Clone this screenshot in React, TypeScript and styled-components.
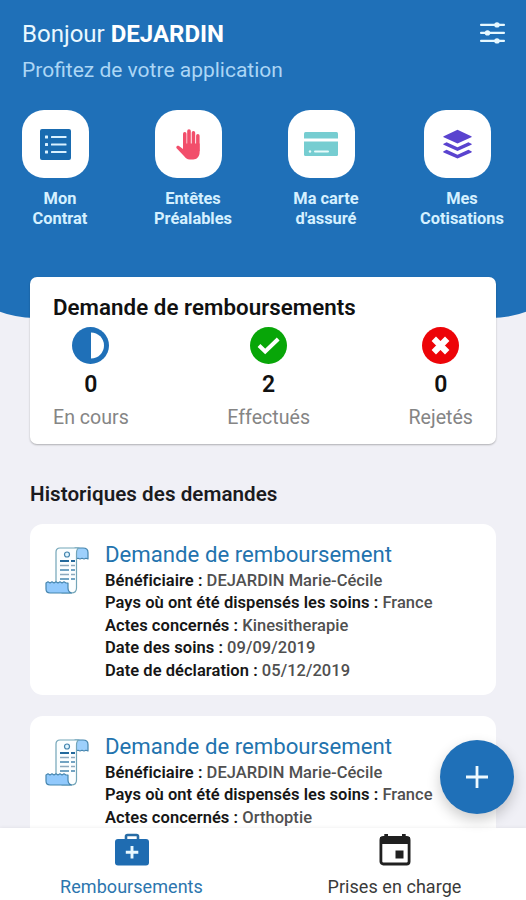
import React from "react";
import styled, { createGlobalStyle } from "styled-components";

const BLUE = "#1f70b8";

const GlobalStyle = createGlobalStyle`
  *, *::before, *::after { box-sizing: border-box; }
  body { margin: 0; background: #f0f0f6; font-family: Roboto, "Liberation Sans", sans-serif; }
  h1, h2, h3, p { margin: 0; }
  svg { display: block; }
`;

const Screen = styled.div`
  position: relative;
  display: flex;
  flex-direction: column;
  width: 526px;
  height: 900px;
  overflow: hidden;
  background: #f0f0f6;
`;

const Content = styled.main`
  flex: 1;
  min-height: 0;
  overflow: hidden;
`;

const Header = styled.header`
  height: 318px;
  margin: 0 -65px;
  padding: 20px 86px 0 87px;
  border-radius: 0 0 100px 100px;
  background: ${BLUE};
  color: #fff;
`;

const TopBar = styled.div`
  display: flex;
  justify-content: space-between;
  align-items: flex-start;
`;

const Greeting = styled.h1`
  font-size: 24px;
  line-height: 28px;
  font-weight: 400;
  color: #e9f8ff;
  white-space: nowrap;
`;

const UserName = styled.b`
  font-weight: 700;
  color: #fff;
`;

const Tagline = styled.p`
  margin-top: 9px;
  font-size: 21px;
  line-height: 26px;
  color: #acd6f5;
  white-space: nowrap;
`;

const MenuButton = styled.div`
  padding-top: 1px;
`;

const Shortcuts = styled.nav`
  display: grid;
  grid-template-columns: 133px 133px 133px 139px;
  margin: 27px 0 0 -28.5px;
`;

const Shortcut = styled.div`
  display: flex;
  flex-direction: column;
  align-items: center;
`;

const Tile = styled.div`
  display: grid;
  place-items: center;
  width: 67px;
  height: 68px;
  margin-right: 10px;
  border-radius: 22px;
  background: #fff;
`;

const ShortcutLabel = styled.span`
  margin-top: 11px;
  font-size: 16.4px;
  line-height: 19.5px;
  font-weight: 700;
  text-align: center;
  white-space: pre-line;
  color: #d5f0ff;
`;

const Summary = styled.section`
  height: 167px;
  margin: -41px 30px 0;
  padding: 16px 23px 0;
  border-radius: 7px;
  background: #fff;
  box-shadow: 0 1px 2px rgba(0, 0, 0, 0.28);
`;

const SummaryTitle = styled.h2`
  font-size: 22.3px;
  line-height: 28px;
  font-weight: 600;
  letter-spacing: 0.05px;
  color: #111;
  white-space: nowrap;
`;

const Stats = styled.div`
  display: flex;
  justify-content: space-between;
  margin-top: 6px;
`;

const Stat = styled.div`
  display: flex;
  flex-direction: column;
  align-items: center;
`;

const StatValue = styled.strong`
  margin-top: 7px;
  font-size: 23px;
  line-height: 28px;
  font-weight: 600;
  color: #111;
`;

const StatLabel = styled.span`
  margin-top: 7px;
  font-size: 19.6px;
  line-height: 24px;
  color: #858585;
`;

const SectionTitle = styled.h2`
  margin: 38px 30px 0;
  font-size: 20.6px;
  line-height: 24px;
  font-weight: 600;
  letter-spacing: 0.05px;
  color: #1b1b1e;
`;

const RequestList = styled.div`
  display: grid;
  gap: 21px;
  padding: 18px 30px 0;
`;

const RequestCard = styled.article`
  display: flex;
  align-items: flex-start;
  gap: 15px;
  height: 171px;
  padding: 16px 16px 0 15px;
  border-radius: 13px;
  background: #fff;
`;

const ReceiptSlot = styled.div`
  flex: none;
  padding-top: 7px;
`;

const RequestTitle = styled.h3`
  margin-bottom: 2px;
  font-size: 22.2px;
  line-height: 28px;
  font-weight: 400;
  color: #2273ae;
  white-space: nowrap;
`;

const Field = styled.p`
  font-size: 16.5px;
  line-height: 22.4px;
  font-weight: 500;
  letter-spacing: 0.04px;
  color: #505050;
  white-space: nowrap;
`;

const FieldName = styled.span`
  font-weight: 600;
  color: #161616;
`;

const TabBar = styled.nav`
  display: grid;
  grid-template-columns: 263px 263px;
  flex: none;
  height: 72px;
  background: #fff;
  box-shadow: 0 -1px 3px rgba(0, 0, 0, 0.05);
`;

const Tab = styled.div<{ $active?: boolean }>`
  display: flex;
  flex-direction: column;
  align-items: center;
  padding-top: 5px;
  font-size: 18px;
  line-height: 22px;
  letter-spacing: 0.05px;
  color: ${(p) => (p.$active ? "#2c76ae" : "#3a3a3a")};
`;

const TabLabel = styled.span`
  margin-top: 10px;
`;

const AddButton = styled.div`
  position: absolute;
  right: 12px;
  bottom: 86px;
  display: grid;
  place-items: center;
  width: 74px;
  height: 74px;
  border-radius: 50%;
  background: ${BLUE};
  box-shadow: 0 6px 14px rgba(0, 0, 0, 0.2);
`;

const SlidersIcon = () => (
  <svg width="25" height="24" viewBox="0 0 25 24" fill="#e6f8ff">
    <rect y="2.8" width="25" height="2.2" rx="1" />
    <rect y="10.8" width="25" height="2.2" rx="1" />
    <rect y="18.8" width="25" height="2.2" rx="1" />
    <circle cx="17" cy="3.9" r="2.7" />
    <circle cx="7.5" cy="11.9" r="2.7" />
    <circle cx="17" cy="19.9" r="2.7" />
  </svg>
);

const ContractIcon = () => (
  <svg width="31" height="31" viewBox="0 0 31 31">
    <rect width="31" height="31" rx="2" fill="#196bb0" />
    <g fill="#d9f1ff">
      {[7, 14.5, 22].map((y) => (
        <React.Fragment key={y}>
          <rect x="5" y={y - 0.4} width="3" height="3" rx="0.5" />
          <rect x="11" y={y} width="15.5" height="2.1" rx="0.5" />
        </React.Fragment>
      ))}
    </g>
  </svg>
);

const HandIcon = () => (
  <svg width="24" height="31" viewBox="0 0 24 31" fill="#f24e6b">
    <rect x="7" y="3" width="3.5" height="17" rx="1.7" />
    <rect x="11.2" y="0.3" width="3.6" height="20" rx="1.8" />
    <rect x="15.7" y="2" width="3.5" height="18" rx="1.7" />
    <rect x="20.1" y="5" width="3.5" height="18" rx="1.7" />
    <path d="M7 14.5h16.600v8.800c0 4.600-3 7.200-6.400 7.200h-3.500c-2.500 0-4.200-1.200-5.500-3.200L.6 19.200C-.5 17.400 1.600 16 3 17l4 3z" />
  </svg>
);

const CardIcon = () => (
  <svg width="34" height="24" viewBox="0 0 34 24">
    <path d="M0 6.500V1.500Q0 0 1.500 0h31Q34 0 34 1.500v5z" fill="#76cdd1" />
    <path d="M0 9.500h34v13q0 1.500-1.500 1.500h-31Q0 24 0 22.500z" fill="#76cdd1" />
    <circle cx="6" cy="19.5" r="1.2" fill="#e7fbfb" />
    <rect x="10" y="18.5" width="15" height="2" rx="1" fill="#e7fbfb" />
  </svg>
);

const LayersIcon = () => (
  <svg width="29" height="30" viewBox="0 0 29 30" fill="#5a43cf">
    <path d="M14.500.8 28.300 7.200q.8.500 0 1L14.500 14.600.7 8.200q-.8-.5 0-1z" />
    <path d="M.6 14.700l3-1.500 10.900 5 10.900-5 3 1.500q.8.500 0 1.100L14.500 22 .6 15.800q-.8-.5 0-1.100z" />
    <path d="M.6 22.300l3-1.500 10.900 5 10.900-5 3 1.500q.8.500 0 1.100L14.500 29.600.6 23.400q-.8-.5 0-1.100z" />
  </svg>
);

const PendingIcon = () => (
  <svg width="37" height="37" viewBox="0 0 37 37">
    <circle cx="18.5" cy="18.5" r="18.5" fill={BLUE} />
    <path d="M19 5.500a13 13 0 0 1 0 26z" fill="#fff" />
  </svg>
);

const DoneIcon = () => (
  <svg width="37" height="37" viewBox="0 0 37 37">
    <circle cx="18.5" cy="18.5" r="18.5" fill="#08a608" />
    <path d="M9 18.500l6.200 6L28.200 12" fill="none" stroke="#fff" strokeWidth="4" />
  </svg>
);

const RejectedIcon = () => (
  <svg width="37" height="37" viewBox="0 0 37 37">
    <circle cx="18.5" cy="18.5" r="18.5" fill="#ed0408" />
    <path d="M11.800 11.800l13.400 13.400M25.200 11.800L11.800 25.200" stroke="#fff" strokeWidth="6.2" />
  </svg>
);

const ReceiptIcon = () => (
  <svg width="45" height="47" viewBox="0 0 45 47" stroke="#4585ae" strokeWidth="1.2" strokeLinejoin="round">
    <path d="M30 1h8q5 0 5 4.500V12l-2-.8-2 .8-2-.8-2 .8-2-.8-2 .6V5z" fill="#9dd0fc" />
    <path d="M34 1q-2.500 1-2.500 5v35q0 5-5 5H17l-6-10V5q0-4 4-4z" fill="#fbfeff" stroke="#73a5b8" />
    <path d="M1 36l2-1.200 2 1.200 2-1.200 2 1.200 2-1.200 2 1.200 2-1.200 2 1.200 2-1.200 2 1.200h2v5q0 4 3.500 5H5q-4 0-4-4z" fill="#91c9fc" />
    <circle cx="22" cy="7.5" r="2.5" fill="#e0f5ff" />
    <g strokeWidth="1.5">
      <path d="M15 14h9M26 14h4" stroke="#23699c" strokeWidth="1.9" />
      <path d="M15 18.500h9M26 18.500h4" stroke="#8da9bd" />
      <path d="M15 23h9M26 23h4" />
      <path d="M15 27.500h9M26 27.500h4" stroke="#8da9bd" />
      <path d="M15 32h9M26 32h4" />
    </g>
  </svg>
);

const MedicalBagIcon = () => (
  <svg width="34" height="33" viewBox="0 0 34 33">
    <path d="M11 6V3.500Q11 2 12.500 2h9Q23 2 23 3.500V6" fill="none" stroke="#286ca5" strokeWidth="2.6" />
    <rect y="6" width="34" height="26.5" rx="3" fill="#1f6cb1" />
    <path d="M17 13v12.500M10.800 19.200h12.500" stroke="#e8f8ff" strokeWidth="2.9" />
  </svg>
);

const CalendarIcon = () => (
  <svg width="34" height="33" viewBox="0 0 34 33">
    <rect x="2.9" y="4.5" width="28.2" height="26.5" rx="2.5" fill="#fff" stroke="#202020" strokeWidth="2.8" />
    <path d="M2 4h30v7H2zM6.300 1h3.700v5H6.300zM24 1h3.700v5H24z" fill="#202020" />
    <rect x="17.5" y="17.5" width="8" height="8" fill="#202020" />
  </svg>
);

const PlusIcon = () => (
  <svg width="24" height="24" viewBox="0 0 24 24" stroke="#eefaff" strokeWidth="2.8">
    <path d="M12 1v22M1 12h22" />
  </svg>
);

const shortcuts = [
  { label: "Mon\nContrat", Icon: ContractIcon },
  { label: "Entêtes\nPréalables", Icon: HandIcon },
  { label: "Ma carte\nd'assuré", Icon: CardIcon },
  { label: "Mes\nCotisations", Icon: LayersIcon },
];

const stats = [
  { label: "En cours", value: 0, Icon: PendingIcon },
  { label: "Effectués", value: 2, Icon: DoneIcon },
  { label: "Rejetés", value: 0, Icon: RejectedIcon },
];

const requests = [
  [
    ["Bénéficiaire", "DEJARDIN Marie-Cécile"],
    ["Pays où ont été dispensés les soins", "France"],
    ["Actes concernés", "Kinesitherapie"],
    ["Date des soins", "09/09/2019"],
    ["Date de déclaration", "05/12/2019"],
  ],
  [
    ["Bénéficiaire", "DEJARDIN Marie-Cécile"],
    ["Pays où ont été dispensés les soins", "France"],
    ["Actes concernés", "Orthoptie"],
  ],
];

export default function App() {
  return (
    <>
      <GlobalStyle />
      <Screen>
        <Content>
          <Header>
            <TopBar>
              <div>
                <Greeting>
                  Bonjour <UserName>DEJARDIN</UserName>
                </Greeting>
                <Tagline>Profitez de votre application</Tagline>
              </div>
              <MenuButton>
                <SlidersIcon />
              </MenuButton>
            </TopBar>
            <Shortcuts>
              {shortcuts.map(({ label, Icon }) => (
                <Shortcut key={label}>
                  <Tile>
                    <Icon />
                  </Tile>
                  <ShortcutLabel>{label}</ShortcutLabel>
                </Shortcut>
              ))}
            </Shortcuts>
          </Header>
          <Summary>
            <SummaryTitle>Demande de remboursements</SummaryTitle>
            <Stats>
              {stats.map(({ label, value, Icon }) => (
                <Stat key={label}>
                  <Icon />
                  <StatValue>{value}</StatValue>
                  <StatLabel>{label}</StatLabel>
                </Stat>
              ))}
            </Stats>
          </Summary>
          <SectionTitle>Historiques des demandes</SectionTitle>
          <RequestList>
            {requests.map((fields, i) => (
              <RequestCard key={i}>
                <ReceiptSlot>
                  <ReceiptIcon />
                </ReceiptSlot>
                <div>
                  <RequestTitle>Demande de remboursement</RequestTitle>
                  {fields.map(([name, value]) => (
                    <Field key={name}>
                      <FieldName>{name} : </FieldName>
                      {value}
                    </Field>
                  ))}
                </div>
              </RequestCard>
            ))}
          </RequestList>
        </Content>
        <TabBar>
          <Tab $active>
            <MedicalBagIcon />
            <TabLabel>Remboursements</TabLabel>
          </Tab>
          <Tab>
            <CalendarIcon />
            <TabLabel>Prises en charge</TabLabel>
          </Tab>
        </TabBar>
        <AddButton>
          <PlusIcon />
        </AddButton>
      </Screen>
    </>
  );
}
